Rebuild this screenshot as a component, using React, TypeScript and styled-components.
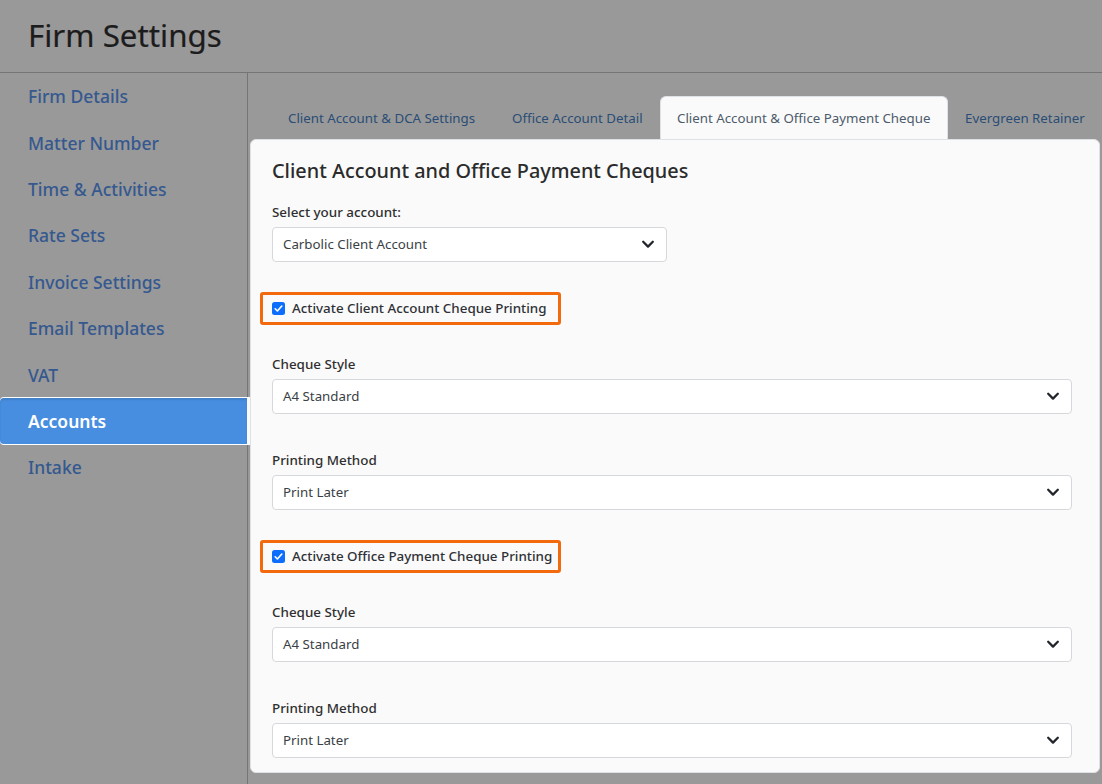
import React from "react";
import styled, { createGlobalStyle } from "styled-components";

const Global = createGlobalStyle`
  html, body { margin: 0; padding: 0; height: 100%; background: #999999; overflow: hidden; }
  body { font-family: "Noto Sans", "Open Sans", "Liberation Sans", sans-serif; color: #212529; }
  * { box-sizing: border-box; }
`;

const Page = styled.div`
  width: 1102px;
  height: 784px;
  display: flex;
  flex-direction: column;
  background: #999999;
  overflow: hidden;
`;
const Header = styled.header`
  height: 73px;
  flex: none;
  padding: 14px 0 0 28px;
  border-bottom: 1px solid #757575;
`;
const Title = styled.h1`
  margin: 0;
  font-size: 31.3px;
  line-height: 43px;
  font-weight: 400;
  color: #1c1c1c;
  -webkit-text-stroke: 0.2px #1c1c1c;
`;
const Body = styled.div`
  flex: 1;
  display: flex;
  min-height: 0;
`;
const Sidebar = styled.nav`
  width: 248px;
  flex: none;
  border-right: 1px solid #757575;
  display: flex;
  flex-direction: column;
`;
const NavItem = styled.a<{ $active?: boolean }>`
  height: 46.4px;
  padding-left: 28px;
  display: flex;
  align-items: center;
  font-size: 17.5px;
  font-weight: ${(p) => (p.$active ? 600 : 500)};
  color: ${(p) => (p.$active ? "#ffffff" : "#35588f")};
  background: ${(p) => (p.$active ? "#478ee0" : "transparent")};
  position: relative;
  margin-right: ${(p) => (p.$active ? "-3px" : "0")};
  border-right: ${(p) => (p.$active ? "3px solid #fafafa" : "none")};
  border-radius: ${(p) => (p.$active ? "4px 0 0 4px" : "0")};
  box-shadow: ${(p) =>
    p.$active ? "0 -1px 0 #fff, 0 1px 0 #fff, inset 0 2px 2px rgba(0, 0, 0, 0.1)" : "none"};
`;
const Main = styled.main`
  flex: 1;
  min-width: 0;
  padding: 23px 2px 11px 2px;
  display: flex;
  flex-direction: column;
`;
const Tabs = styled.div`
  height: 43px;
  flex: none;
  padding-left: 21px;
  display: flex;
  align-items: flex-end;
`;
const Tab = styled.div<{ $active?: boolean; $width: number }>`
  width: ${(p) => p.$width}px;
  height: 43px;
  flex: none;
  padding: 0 0 0 16px;
  display: flex;
  align-items: center;
  white-space: nowrap;
  font-size: 13.3px;
  color: ${(p) => (p.$active ? "#4d5b6b" : "#2a4d75")};
  background: ${(p) => (p.$active ? "#fafafa" : "transparent")};
  border: 1px solid ${(p) => (p.$active ? "#dee2e6" : "transparent")};
  border-bottom: none;
  border-radius: 6px 6px 0 0;
`;
const Card = styled.section`
  flex: 1;
  background: #fafafa;
  border-radius: 6px;
  border: 1px solid #dee2e6;
  padding: 17px 27px 0 21px;
  display: flex;
  flex-direction: column;
`;
const CardTitle = styled.h2`
  margin: 0 0 17px;
  font-size: 19.85px;
  line-height: 28px;
  font-weight: 500;
  color: #2b2b2b;
`;
const Label = styled.label`
  display: block;
  font-size: 13.4px;
  line-height: 20px;
  font-weight: 500;
  color: #2f2f2f;
  margin-bottom: 5px;
`;
const Select = styled.div<{ $narrow?: boolean }>`
  width: ${(p) => (p.$narrow ? "395px" : "100%")};
  height: 35px;
  background: #ffffff;
  border: 1px solid #d5d8dc;
  border-radius: 4px;
  padding: 0 11px 1px 10px;
  display: flex;
  align-items: center;
  justify-content: space-between;
  font-size: 13.3px;
  color: #3a3f45;
`;
const Field = styled.div<{ $gap: number }>`
  margin-bottom: ${(p) => p.$gap}px;
`;
const Highlight = styled.div`
  width: 301px;
  height: 33px;
  margin-left: -12px;
  border: 3px solid #f26a0c;
  border-radius: 3px;
  padding: 0 0 1px 9px;
  display: flex;
  align-items: center;
  gap: 7px;
  font-size: 13.38px;
  font-weight: 500;
  color: #2f3136;
  white-space: nowrap;
`;
const CheckBox = styled.span`
  width: 13px;
  height: 13px;
  flex: none;
  border-radius: 2.5px;
  background: #0d6efd;
  display: flex;
  align-items: center;
  justify-content: center;
`;
const CheckRow = styled.div<{ $gap: number }>`
  margin-bottom: ${(p) => p.$gap}px;
`;

const Chevron = () => (
  <svg width="14" height="14" viewBox="0 0 16 16" fill="none" aria-hidden="true">
    <path d="M2.5 5.5 8 11l5.5-5.5" stroke="#212529" strokeWidth="2.6" strokeLinecap="round" strokeLinejoin="round" />
  </svg>
);
const Tick = () => (
  <svg width="11" height="11" viewBox="0 0 20 20" fill="none" aria-hidden="true">
    <path d="m4 10.5 4 4 8-9" stroke="#fff" strokeWidth="3" strokeLinecap="round" strokeLinejoin="round" />
  </svg>
);

const nav = ["Firm Details", "Matter Number", "Time & Activities", "Rate Sets", "Invoice Settings", "Email Templates", "VAT", "Accounts", "Intake"];
const tabs = [
  { text: "Client Account & DCA Settings", width: 224 },
  { text: "Office Account Detail", width: 165 },
  { text: "Client Account & Office Payment Cheque", width: 288 },
  { text: "Evergreen Retainer", width: 140 },
];

const Check = ({ text, gap }: { text: string; gap: number }) => (
  <CheckRow $gap={gap}>
    <Highlight>
      <CheckBox><Tick /></CheckBox>
      {text}
    </Highlight>
  </CheckRow>
);
const SelectField = ({ label, value, gap, narrow }: { label: string; value: string; gap: number; narrow?: boolean }) => (
  <Field $gap={gap}>
    <Label>{label}</Label>
    <Select $narrow={narrow}>
      {value}
      <Chevron />
    </Select>
  </Field>
);

export default function App() {
  return (
    <Page>
      <Global />
      <Header><Title>Firm Settings</Title></Header>
      <Body>
        <Sidebar>
          {nav.map((n) => <NavItem key={n} $active={n === "Accounts"}>{n}</NavItem>)}
        </Sidebar>
        <Main>
          <Tabs>
            {tabs.map((t, i) => <Tab key={t.text} $active={i === 2} $width={t.width}>{t.text}</Tab>)}
          </Tabs>
          <Card>
            <CardTitle>Client Account and Office Payment Cheques</CardTitle>
            <SelectField label="Select your account:" value="Carbolic Client Account" gap={30} narrow />
            <Check text="Activate Client Account Cheque Printing" gap={29} />
            <SelectField label="Cheque Style" value="A4 Standard" gap={36} />
            <SelectField label="Printing Method" value="Print Later" gap={30} />
            <Check text="Activate Office Payment Cheque Printing" gap={29} />
            <SelectField label="Cheque Style" value="A4 Standard" gap={36} />
            <SelectField label="Printing Method" value="Print Later" gap={0} />
          </Card>
        </Main>
      </Body>
    </Page>
  );
}
